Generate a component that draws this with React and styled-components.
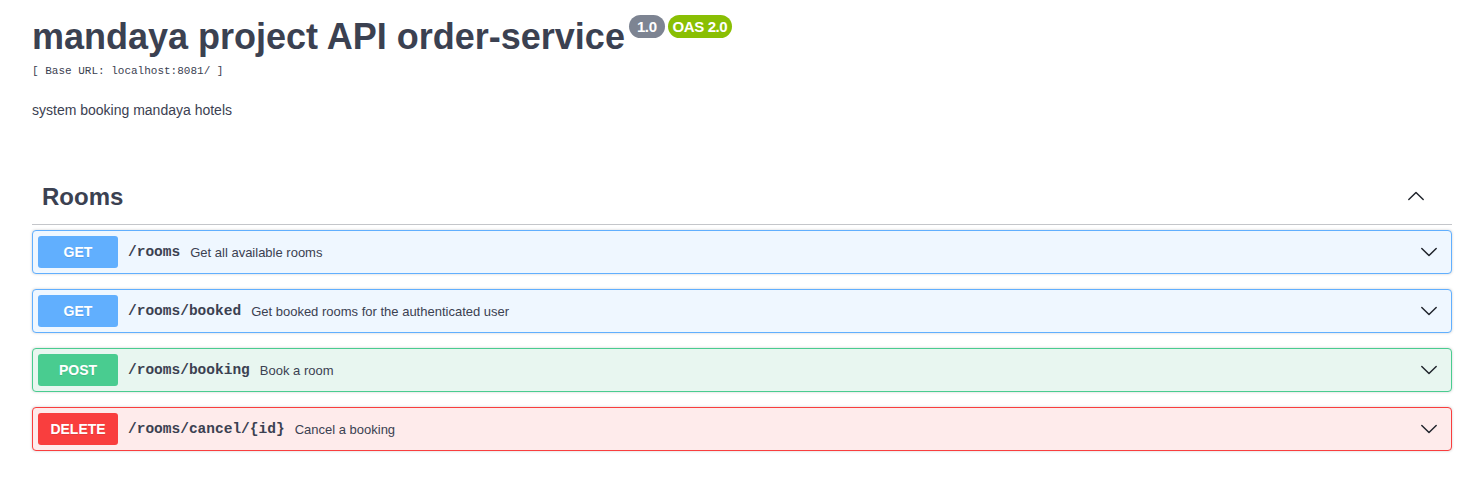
import React from "react";
import styled, { createGlobalStyle } from "styled-components";

const GlobalStyle = createGlobalStyle`
  html, body {
    margin: 0;
    padding: 0;
    background: #fff;
  }
  body {
    font-family: "Liberation Sans", Arial, sans-serif;
    color: #3b4151;
  }
`;

const methods = {
  get: { color: "#61affe", bg: "#eff7ff" },
  post: { color: "#49cc90", bg: "#e8f6f0" },
  delete: { color: "#f93e3e", bg: "#feebeb" },
};

const operations = [
  { method: "get", path: "/rooms", summary: "Get all available rooms" },
  { method: "get", path: "/rooms/booked", summary: "Get booked rooms for the authenticated user" },
  { method: "post", path: "/rooms/booking", summary: "Book a room" },
  { method: "delete", path: "/rooms/cancel/{id}", summary: "Cancel a booking" },
];

const Chevron = ({ up }) => (
  <svg width="18" height="18" viewBox="0 0 20 20">
    <polyline
      points={up ? "2,14 10,6 18,14" : "2,6 10,14 18,6"}
      fill="none"
      stroke="#1f232b"
      strokeWidth="1.6"
      strokeLinecap="round"
      strokeLinejoin="round"
    />
  </svg>
);

const App = () => {
  return (
    <Wrapper>
      <GlobalStyle />
      <Info>
        <Title>
          mandaya project API order-service
          <Badge>1.0</Badge>
          <Badge oas>OAS 2.0</Badge>
        </Title>
        <BaseUrl>[ Base URL: localhost:8081/ ]</BaseUrl>
        <Description>system booking mandaya hotels</Description>
      </Info>
      <TagHeader>
        <TagName>Rooms</TagName>
        <TagArrow>
          <Chevron up />
        </TagArrow>
      </TagHeader>
      <OpList>
        {operations.map((op, idx) => (
          <Opblock key={idx} method={op.method}>
            <Method method={op.method}>{op.method.toUpperCase()}</Method>
            <Path>{op.path}</Path>
            <Summary>{op.summary}</Summary>
            <OpArrow>
              <Chevron />
            </OpArrow>
          </Opblock>
        ))}
      </OpList>
    </Wrapper>
  );
};

export default App;

const Wrapper = styled.div`
  padding: 15px 20px 20px 32px;
`;
const Info = styled.div`
  display: flex;
  flex-direction: column;
`;
const Title = styled.h2`
  margin: 0;
  font-size: 36px;
  line-height: 44px;
  font-weight: 700;
  color: #3b4151;
  display: flex;
  align-items: flex-start;
`;
const Badge = styled.span`
  margin: 0 0 0 ${props => (props.oas ? "3px" : "4px")};
  padding: ${props => (props.oas ? "0 5px" : "0 8px")};
  height: 23px;
  line-height: 23px;
  border-radius: 12px;
  font-size: 15px;
  font-weight: 700;
  color: #fff;
  letter-spacing: -0.4px;
  background: ${props => (props.oas ? "#89bf04" : "#7d8492")};
`;
const BaseUrl = styled.div`
  margin-top: 5px;
  font-family: "Liberation Mono", monospace;
  font-size: 11px;
  line-height: 14px;
  color: #3b4151;
`;
const Description = styled.div`
  margin-top: 23px;
  font-size: 14px;
  line-height: 18px;
  color: #3b4151;
`;
const TagHeader = styled.div`
  margin-top: 54px;
  display: flex;
  align-items: center;
  padding: 10px 0 13px 10px;
  border-bottom: 1px solid rgba(59, 65, 81, 0.3);
`;
const TagName = styled.h3`
  flex: 1;
  margin: 0;
  font-size: 24px;
  line-height: 28px;
  font-weight: 700;
  color: #3b4151;
`;
const TagArrow = styled.div`
  display: flex;
  margin-right: 27px;
  margin-top: -3px;
`;
const OpList = styled.div`
  margin-top: 5px;
  display: flex;
  flex-direction: column;
  gap: 15px;
`;
const Opblock = styled.div`
  display: flex;
  align-items: center;
  padding: 5px;
  border: 1px solid ${props => methods[props.method].color};
  background: ${props => methods[props.method].bg};
  border-radius: 4px;
  box-shadow: 0 0 3px rgba(0, 0, 0, 0.19);
`;
const Method = styled.span`
  min-width: 80px;
  padding: 6px 0;
  line-height: 20px;
  text-align: center;
  font-size: 14px;
  font-weight: 700;
  color: #fff;
  border-radius: 3px;
  text-shadow: 0 1px 0 rgba(0, 0, 0, 0.1);
  background: ${props => methods[props.method].color};
`;
const Path = styled.span`
  padding: 0 10px;
  font-family: "Liberation Mono", monospace;
  font-size: 14.5px;
  font-weight: 700;
  color: #3b4151;
`;
const Summary = styled.span`
  flex: 1;
  font-size: 13px;
  color: #3b4151;
`;
const OpArrow = styled.div`
  display: flex;
  margin-right: 8px;
`;
